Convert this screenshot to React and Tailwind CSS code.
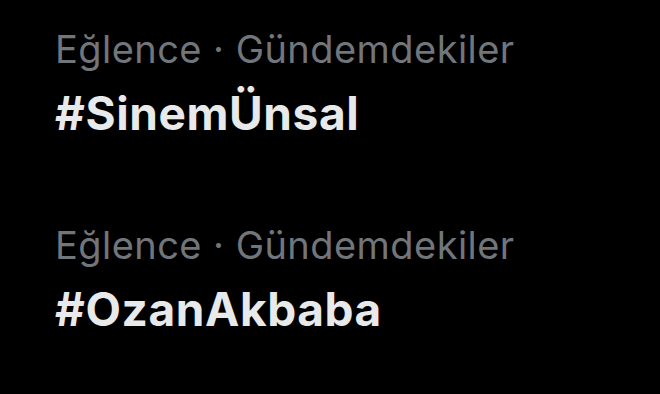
export default function App() {
  const items = [
    { cat: "Eğlence · Gündemdekiler", tag: "#SinemÜnsal" },
    { cat: "Eğlence · Gündemdekiler", tag: "#OzanAkbaba" },
  ];
  return (
    <div className="w-[660px] h-[394px] bg-black overflow-hidden pl-[55px] pt-[25px] flex flex-col gap-[82px]" style={{ fontFamily: "Inter, 'Noto Sans', sans-serif" }}>
      {items.map((it, i) => (
        <div key={i} className="flex flex-col">
          <div className="text-[#71767b] text-[38px] leading-[48px] tracking-[0.45px] whitespace-nowrap">{it.cat}</div>
          <div className="text-[#e7e9ea] text-[46px] leading-[52px] font-bold tracking-[0.6px] mt-[14px] whitespace-nowrap">{it.tag}</div>
        </div>
      ))}
    </div>
  );
}
